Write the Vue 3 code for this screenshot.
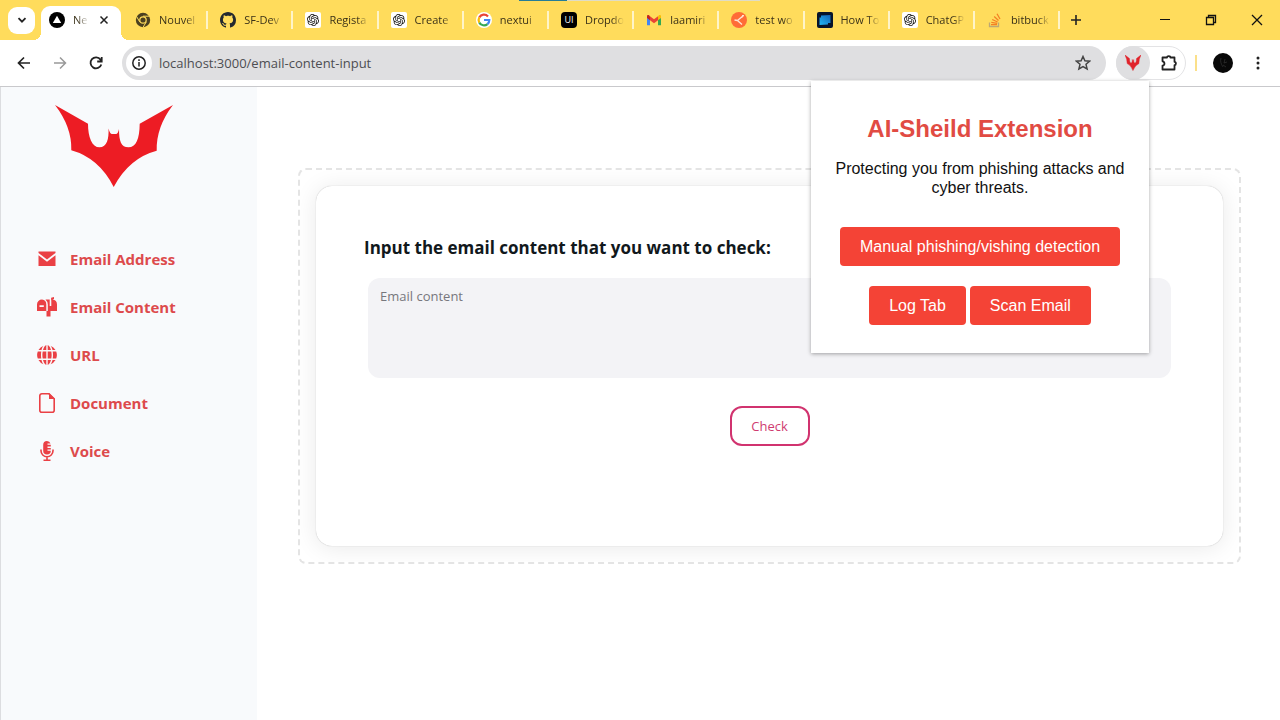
<template>
  <div class="browser">
    <header class="chrome">
      <div class="screen-edge"></div>
      <div class="tab-strip">
        <button class="tab-search" aria-label="Search tabs">
          <svg width="10" height="10" viewBox="0 0 10 10"><path d="M1.5 3.2 5 6.7l3.5-3.5" fill="none" stroke="#222" stroke-width="1.8" /></svg>
        </button>
        <div class="tab-active">
          <svg class="favicon" viewBox="0 0 16 16"><circle cx="8" cy="8" r="8" fill="#000" /><path d="M8 3.8 12.2 11H3.8z" fill="#fff" /></svg>
          <span class="tab-title">Ne</span>
          <button class="tab-close" aria-label="Close tab">
            <svg width="10" height="10" viewBox="0 0 10 10"><path d="m1.5 1.5 7 7m0-7-7 7" stroke="#222" stroke-width="1.5" /></svg>
          </button>
        </div>
        <nav class="tabs" aria-label="Open tabs">
          <a v-for="(tab, i) in tabs" :key="i" class="tab" href="#">
            <svg v-if="tab.icon === 'chrome'" class="favicon" viewBox="0 0 16 16">
              <circle cx="8" cy="8" r="7.2" fill="#4b4020" />
              <path d="M8 4.2h6.7M4.7 9.9 1.4 4.2M11.3 9.9 8 15.3" stroke="#ffdc5c" stroke-width="1" />
              <circle cx="8" cy="8" r="3.8" fill="#ffdc5c" />
              <circle cx="8" cy="8" r="2.6" fill="#4b4020" />
            </svg>
            <svg v-else-if="tab.icon === 'github'" class="favicon" viewBox="0 0 16 16">
              <path fill="#24292f" d="M8 0C3.58 0 0 3.58 0 8c0 3.54 2.29 6.53 5.47 7.59.4.07.55-.17.55-.38 0-.19-.01-.82-.01-1.49-2.01.37-2.53-.49-2.69-.94-.09-.23-.48-.94-.82-1.13-.28-.15-.68-.52-.01-.53.63-.01 1.08.58 1.23.82.72 1.21 1.87.87 2.33.66.07-.52.28-.87.51-1.07-1.78-.2-3.64-.89-3.64-3.95 0-.87.31-1.59.82-2.15-.08-.2-.36-1.02.08-2.12 0 0 .67-.21 2.2.82.64-.18 1.32-.27 2-.27s1.36.09 2 .27c1.53-1.04 2.2-.82 2.2-.82.44 1.1.16 1.92.08 2.12.51.56.82 1.27.82 2.15 0 3.07-1.87 3.75-3.65 3.95.29.25.54.73.54 1.48 0 1.07-.01 1.93-.01 2.2 0 .21.15.46.55.38A8.01 8.01 0 0 0 16 8c0-4.42-3.58-8-8-8" />
            </svg>
            <svg v-else-if="tab.icon === 'openai'" class="favicon" viewBox="-4 -4 32 32">
              <rect x="-4" y="-4" width="32" height="32" rx="4" fill="#fff" />
              <path fill="#111" d="M22.2819 9.8211a5.9847 5.9847 0 0 0-.5157-4.9108 6.0462 6.0462 0 0 0-6.5098-2.9A6.0651 6.0651 0 0 0 4.9807 4.1818a5.9847 5.9847 0 0 0-3.9977 2.9 6.0462 6.0462 0 0 0 .7427 7.0966 5.98 5.98 0 0 0 .511 4.9107 6.051 6.051 0 0 0 6.5146 2.9001A5.9847 5.9847 0 0 0 13.2599 24a6.0557 6.0557 0 0 0 5.7718-4.2058 5.9894 5.9894 0 0 0 3.9977-2.9001 6.0557 6.0557 0 0 0-.7475-7.0729zm-9.022 12.6081a4.4755 4.4755 0 0 1-2.8764-1.0408l.1419-.0804 4.7783-2.7582a.7948.7948 0 0 0 .3927-.6813v-6.7369l2.02 1.1686a.071.071 0 0 1 .038.052v5.5826a4.504 4.504 0 0 1-4.4945 4.4944zm-9.6607-4.1254a4.4708 4.4708 0 0 1-.5346-3.0137l.142.0852 4.783 2.7582a.7712.7712 0 0 0 .7806 0l5.8428-3.3685v2.3324a.0804.0804 0 0 1-.0332.0615L9.74 19.9502a4.4992 4.4992 0 0 1-6.1408-1.6464zM2.3408 7.8956a4.485 4.485 0 0 1 2.3655-1.9728V11.6a.7664.7664 0 0 0 .3879.6765l5.8144 3.3543-2.0201 1.1685a.0757.0757 0 0 1-.071 0l-4.8303-2.7865A4.504 4.504 0 0 1 2.3408 7.872zm16.5963 3.8558L13.1038 8.364 15.1192 7.2a.0757.0757 0 0 1 .071 0l4.8303 2.7913a4.4944 4.4944 0 0 1-.6765 8.1042v-5.6772a.79.79 0 0 0-.407-.667zm2.0107-3.0231l-.142-.0852-4.7735-2.7818a.7759.7759 0 0 0-.7854 0L9.409 9.2297V6.8974a.0662.0662 0 0 1 .0284-.0615l4.8303-2.7866a4.4992 4.4992 0 0 1 6.6802 4.66zM8.3065 12.863l-2.02-1.1638a.0804.0804 0 0 1-.038-.0567V6.0742a4.4992 4.4992 0 0 1 7.3757-3.4537l-.142.0805L8.704 5.459a.7948.7948 0 0 0-.3927.6813zm1.0976-2.3654l2.602-1.4998 2.6069 1.4998v2.9994l-2.5974 1.4997-2.6067-1.4997Z" />
            </svg>
            <svg v-else-if="tab.icon === 'google'" class="favicon" viewBox="0 0 16 16">
              <circle cx="8" cy="8" r="8" fill="#fff" />
              <g fill="none" stroke-width="2.2">
                <path d="M12 4.4A5.4 5.4 0 0 0 3.3 5.4" stroke="#ea4335" />
                <path d="M3.3 5.4a5.4 5.4 0 0 0 0 5.2" stroke="#fbbc05" />
                <path d="M3.3 10.6a5.4 5.4 0 0 0 8.2 1.5" stroke="#34a853" />
                <path d="M11.5 12.1A5.4 5.4 0 0 0 13.3 8H8" stroke="#4285f4" />
              </g>
            </svg>
            <span v-else-if="tab.icon === 'nextui'" class="favicon favicon-ui">UI</span>
            <svg v-else-if="tab.icon === 'gmail'" class="favicon" viewBox="0 0 16 16">
              <path d="M1 4v9.2h3V7z" fill="#4285f4" />
              <path d="M15 4v9.2h-3V7z" fill="#34a853" />
              <path d="m12 4.2 1-1c.9-.7 2 0 2 1V6l-3 2.3z" fill="#fbbc04" />
              <path d="M4 4.2 3 3.2c-1-.7-2 0-2 1V6l3 2.3z" fill="#c5221f" />
              <path d="m4 4.2 4 3.1 4-3.1v4.1l-4 3-4-3z" fill="#ea4335" />
            </svg>
            <svg v-else-if="tab.icon === 'postman'" class="favicon" viewBox="0 0 16 16">
              <circle cx="8" cy="8" r="8" fill="#ff6c37" />
              <path d="M12.500 3.500 6.500 8.500l4.500 4M6.500 8.500 3.500 8M10.500 5.500l2-2" fill="none" stroke="#ffe3d2" stroke-width="1.4" />
            </svg>
            <svg v-else-if="tab.icon === 'video'" class="favicon" viewBox="0 0 16 16">
              <defs>
                <linearGradient id="screen" x1="0" y1="1" x2="1" y2="0"><stop offset="0" stop-color="#22b8f5" /><stop offset="1" stop-color="#1464b8" /></linearGradient>
              </defs>
              <rect width="16" height="16" rx="2" fill="#07142b" />
              <path d="M4 3.500 13.500 3v8H11v1.500L2.500 13V5.500H4z" fill="url(#screen)" />
            </svg>
            <svg v-else class="favicon" viewBox="0 0 16 16">
              <path d="M2.5 10.500v4h9v-4" fill="none" stroke="#bda874" stroke-width="1.3" />
              <path d="M4 12.600h6M4.300 10.300l5.900 1M5.200 7.500l5.400 2.500M7.200 4.500l4.300 4M10 1.800l3 5.200" stroke="#f48024" stroke-width="1.3" />
            </svg>
            <span class="tab-title">{{ tab.title }}</span>
          </a>
        </nav>
        <button class="new-tab" aria-label="New tab">
          <svg width="12" height="12" viewBox="0 0 12 12"><path d="M6 1v10M1 6h10" stroke="#222" stroke-width="1.6" /></svg>
        </button>
        <div class="window-controls">
          <button aria-label="Minimize"><svg width="12" height="12" viewBox="0 0 12 12"><path d="M1 5.500h10" stroke="#111" /></svg></button>
          <button aria-label="Restore"><svg width="12" height="12" viewBox="0 0 12 12"><path d="M1.500 3.500h7v7h-7zM3.500 3.500v-2h7v7h-2" fill="none" stroke="#111" stroke-width="1.3" /></svg></button>
          <button aria-label="Close"><svg width="12" height="12" viewBox="0 0 12 12"><path d="m1 1 10 10M11 1 1 11" stroke="#111" stroke-width="1.3" /></svg></button>
        </div>
      </div>

      <div class="toolbar">
        <div class="nav-buttons">
          <button aria-label="Back"><svg width="14" height="14" viewBox="0 0 14 14"><path d="M13 7H2M7 1.500 1.500 7 7 12.500" fill="none" stroke="#222" stroke-width="1.7" /></svg></button>
          <button aria-label="Forward"><svg width="14" height="14" viewBox="0 0 14 14"><path d="M1 7h11M7 1.500 12.500 7 7 12.500" fill="none" stroke="#999" stroke-width="1.5" /></svg></button>
          <button aria-label="Reload"><svg width="14" height="14" viewBox="0 0 14 14"><path d="M12.300 8.500A5.500 5.500 0 1 1 11.500 3.600L12.500 5M12.700 1v4.500H8.200" fill="none" stroke="#222" stroke-width="1.8" /></svg></button>
        </div>
        <div class="address-bar">
          <button class="site-info" aria-label="Site information">
            <svg width="14" height="14" viewBox="0 0 14 14"><circle cx="7" cy="7" r="6.200" fill="none" stroke="#222" stroke-width="1.5" /><path d="M7 6v4.500M7 3.300V5" stroke="#222" stroke-width="1.5" /></svg>
          </button>
          <input v-model="url" class="url" type="text" aria-label="Address" />
          <button class="bookmark" aria-label="Bookmark this tab">
            <svg width="16" height="16" viewBox="0 0 16 16"><path d="m8 1.500 1.900 4.300 4.700.4-3.600 3.100 1.100 4.600L8 11.500l-4.100 2.400L5 9.300 1.400 6.200l4.700-.4z" fill="none" stroke="#444" stroke-width="1.5" /></svg>
          </button>
        </div>
        <div class="extensions">
          <button class="extension-active" aria-label="AI-Sheild">
            <svg width="16" height="16" viewBox="0 0 118 118"><path :d="batPath" transform="scale(1 1.4)" fill="#e0232b" stroke="#e0232b" stroke-width="3" /></svg>
          </button>
          <button class="extension-menu" aria-label="Extensions">
            <svg width="18" height="18" viewBox="0 0 18 18"><path d="M2.500 3.500H7a1.700 1.400 0 0 1 3.400 0h4.100v4.300a1.400 1.700 0 0 1 0 3.400v4.300h-12v-3.800c2.600-.4 2.600-4 0-4.400z" fill="none" stroke="#222" stroke-width="1.8" stroke-linejoin="round" /></svg>
          </button>
        </div>
        <span class="toolbar-divider"></span>
        <button class="profile" aria-label="Profile">
          <svg width="20" height="20" viewBox="0 0 20 20"><circle cx="10" cy="10" r="10" fill="#080808" /><path d="M8 5c-1 3 0 6 2 9M12 6l-1 4 3-1M10 12l3 2" fill="none" stroke="#3a3a3a" stroke-width=".6" /></svg>
        </button>
        <button class="more" aria-label="Menu">
          <svg width="4" height="16" viewBox="0 0 4 16"><g fill="#222"><circle cx="2" cy="3" r="1.5" /><circle cx="2" cy="8" r="1.5" /><circle cx="2" cy="13" r="1.5" /></g></svg>
        </button>
      </div>

      <section class="popup">
        <h1>AI-Sheild Extension</h1>
        <p>Protecting you from phishing attacks and cyber threats.</p>
        <div class="popup-actions">
          <button>Manual phishing/vishing detection</button>
          <button>Log Tab</button>
          <button>Scan Email</button>
        </div>
      </section>
    </header>

    <div class="page">
      <aside class="sidebar">
        <svg class="logo" viewBox="0 0 118 82" role="img" aria-label="AI-Sheild"><path :d="batPath" fill="#ed1c24" /></svg>
        <nav class="menu">
          <a v-for="item in menu" :key="item.label" class="menu-item" href="#">
            <svg class="menu-icon" viewBox="0 0 20 20">
              <path v-for="d in item.fills" :key="d" :d="d" fill="currentColor" fill-rule="evenodd" />
              <path v-if="item.stroke" :d="item.stroke" fill="none" stroke="currentColor" stroke-width="1.6" />
            </svg>
            <span>{{ item.label }}</span>
          </a>
        </nav>
      </aside>

      <main class="content">
        <div class="drop-frame">
          <form class="card" @submit.prevent>
            <label for="email-content">Input the email content that you want to check:</label>
            <textarea id="email-content" v-model="emailContent" placeholder="Email content"></textarea>
            <button class="check" type="submit">Check</button>
          </form>
        </div>
      </main>
    </div>
  </div>
</template>

<script setup>
import { ref } from 'vue';

const url = ref('localhost:3000/email-content-input');
const emailContent = ref('');

const batPath = 'M0 0 33 18.7C33 32 37 42.3 44.500 42.300S54 34 53.500 23.500Q55 29 57 29H61Q63 29 64 24C64 36 66 42.300 73.500 42.300S84.500 34 84.700 18.700L118 0Q101 22 101.700 45.700Q74 53 58.700 82Q44 53 16.300 45.300Q17 22 0 0z';

const tabs = [
  { title: 'Nouvel', icon: 'chrome' },
  { title: 'SF-Dev', icon: 'github' },
  { title: 'Regista', icon: 'openai' },
  { title: 'Create', icon: 'openai' },
  { title: 'nextui', icon: 'google' },
  { title: 'Dropdo', icon: 'nextui' },
  { title: 'laamiri', icon: 'gmail' },
  { title: 'test wo', icon: 'postman' },
  { title: 'How To', icon: 'video' },
  { title: 'ChatGP', icon: 'openai' },
  { title: 'bitbuck', icon: 'stack' }
];

const menu = [
  {
    label: 'Email Address',
    fills: ['M1.5 2.5h17v1.4L10 10.5 1.5 3.9z', 'M1.5 6.2 10 12.8l8.5-6.6V17h-17z']
  },
  {
    label: 'Email Content',
    fills: [
      'M5 2.5a5 5 0 0 0-5 5V14h9.300V7.500A5 5 0 0 0 5 2.500zM2.500 8.300h4.300v1.800H2.500z',
      'M8.500 2.500h4.200V9h1.600V3.300h-.2V.7L17 0v2l-1.500.5A5 5 0 0 1 20 7.500V14h-6.500v5.500h-4V14h1.300V7.500a7 7 0 0 0-2.300-5z'
    ]
  },
  {
    label: 'URL',
    fills: [
      'M9.300 0v5H6C6.700 2.500 7.800.6 9.300 0zM10.700 0v5H14c-.7-2.500-1.800-4.400-3.300-5zM6.500.7A10 10 0 0 0 1.500 5h3C4.900 3.200 5.600 1.700 6.500.7zM13.500.7a10 10 0 0 1 5 4.300h-3c-.4-1.800-1.100-3.300-2-4.300z',
      'M.8 6.400h3.500a22 22 0 0 0 0 7.200H.8a10 10 0 0 1 0-7.200zM5.700 6.400h3.600v7.200H5.700a20 20 0 0 1 0-7.200zM10.700 6.400h3.600a20 20 0 0 1 0 7.200h-3.600zM15.700 6.400h3.500a10 10 0 0 1 0 7.200h-3.500a22 22 0 0 0 0-7.200z',
      'M9.300 20v-5H6c.7 2.500 1.800 4.400 3.300 5zM10.700 20v-5H14c-.7 2.500-1.800 4.400-3.300 5zM6.500 19.300a10 10 0 0 1-5-4.300h3c.4 1.800 1.100 3.300 2 4.300zM13.500 19.300a10 10 0 0 0 5-4.300h-3c-.4 1.800-1.100 3.300-2 4.300z'
    ]
  },
  {
    label: 'Document',
    fills: ['M12 0v6h6z'],
    stroke: 'M12 .8H4.800a2 2 0 0 0-2 2v14.400a2 2 0 0 0 2 2h10.400a2 2 0 0 0 2-2V5.800z'
  },
  {
    label: 'Voice',
    fills: [
      'M10 0a3.800 3.800 0 0 0-3.800 3.800v6a3.800 3.800 0 0 0 7.600 0h-3.300V8.500h3.300V6.900h-3.300V5.600h3.300V3.800h-3.300V2.500h3A3.800 3.800 0 0 0 10 0z'
    ],
    stroke: 'M4 8.500v1.300a6 6 0 0 0 12 0V8.500M10 16v3M6.500 19.200h7'
  }
];
</script>

<style>
body {
  margin: 0;
}
</style>

<style scoped>
.browser {
  min-height: 100vh;
  display: flex;
  flex-direction: column;
  background-color: #fff;
  font-family: 'Open Sans', 'Noto Sans', sans-serif;
}

.browser button {
  padding: 0;
  border: none;
  background: none;
  font-family: inherit;
  display: flex;
  align-items: center;
  justify-content: center;
}

.chrome {
  position: relative;
}

.tab-strip {
  height: 40px;
  display: flex;
  align-items: center;
  padding-left: 8px;
  background-color: #ffdc5c;
}

/* sliver of the window behind the browser */
.screen-edge {
  position: absolute;
  top: 0;
  left: 519px;
  width: 241px;
  height: 1px;
  background: linear-gradient(90deg, #257d97 48px, #dfdcc6 48px);
}

.browser .tab-search {
  width: 27px;
  height: 27px;
  border-radius: 9px;
  background-color: #fff;
}

.tab-active {
  position: relative;
  box-sizing: border-box;
  width: 80px;
  height: 34px;
  margin: 6px 2px 0 6px;
  padding: 0 12px 6px 8px;
  display: flex;
  align-items: center;
  border-radius: 9px 9px 0 0;
  background-color: #fff;
}

.tab-active::before,
.tab-active::after {
  content: '';
  position: absolute;
  bottom: 0;
  width: 8px;
  height: 8px;
}

.tab-active::before {
  left: -8px;
  background: radial-gradient(circle at 0 0, transparent 8px, #fff 8px);
}

.tab-active::after {
  right: -8px;
  background: radial-gradient(circle at 100% 0, transparent 8px, #fff 8px);
}

.favicon {
  width: 16px;
  height: 16px;
  flex: none;
}

.favicon-ui {
  border-radius: 4px;
  background-color: #000;
  color: #fff;
  font-size: 9px;
  line-height: 16px;
  text-align: center;
}

.tab-title {
  flex: 1;
  min-width: 0;
  margin-left: 8px;
  white-space: nowrap;
  font-size: 11px;
  line-height: 18px;
  color: #3a3118;
  mask-image: linear-gradient(90deg, #000 calc(100% - 12px), transparent);
}

.tab-active .tab-title {
  margin-right: 10px;
}

.tabs {
  flex: 0 1 937px;
  min-width: 0;
  display: flex;
}

.tab {
  flex: 1;
  min-width: 0;
  box-sizing: border-box;
  height: 18px;
  padding: 0 8px 0 12px;
  display: flex;
  align-items: center;
  text-decoration: none;
  border-right: 2px solid #fff4c9;
}

.browser .new-tab {
  width: 32px;
  height: 28px;
}

.window-controls {
  margin-left: auto;
  display: flex;
}

.window-controls button {
  width: 46px;
  height: 40px;
}

.toolbar {
  height: 46px;
  box-sizing: content-box;
  padding-right: 12px;
  display: flex;
  align-items: center;
  border-bottom: 1px solid #c9c9cc;
  background-color: #fff;
}

.nav-buttons {
  display: flex;
  padding: 0 8px 0 6px;
}

.nav-buttons button {
  width: 36px;
  height: 34px;
}

.address-bar {
  flex: 1;
  height: 34px;
  box-sizing: border-box;
  padding: 0 15px 0 4px;
  display: flex;
  align-items: center;
  border-radius: 17px;
  background-color: #dfdfe1;
}

.browser .site-info {
  width: 26px;
  height: 26px;
  border-radius: 50%;
  background-color: #fff;
}

.url {
  flex: 1;
  min-width: 0;
  margin-left: 7px;
  padding: 0;
  border: none;
  outline: none;
  background: none;
  font-family: inherit;
  font-size: 13px;
  line-height: 20px;
  color: #4d4e52;
}

.extensions {
  margin-left: 10px;
  display: flex;
  height: 34px;
  box-sizing: border-box;
  border: 1px solid #e3e3e5;
  border-radius: 17px;
}

.browser .extension-active {
  width: 34px;
  height: 34px;
  margin: -1px;
  border-radius: 50%;
  background-color: #dfdfe1;
}

.browser .extension-menu {
  width: 36px;
  padding-left: 4px;
}

.toolbar-divider {
  width: 2px;
  height: 16px;
  margin: 0 16px 0 9px;
  background-color: #fbe08a;
}

.more {
  width: 20px;
  height: 34px;
  margin-left: 15px;
}

.popup {
  position: absolute;
  z-index: 2;
  top: 81px;
  right: 131px;
  width: 338px;
  box-sizing: border-box;
  padding: 32px 20px 18px;
  background-color: #fff;
  box-shadow: 0 1px 4px rgba(0, 0, 0, 0.35);
  font-family: 'Liberation Sans', Arial, sans-serif;
  text-align: center;
}

.popup h1 {
  margin: 0;
  font-size: 24px;
  line-height: 32px;
  font-weight: 700;
  color: #e14b43;
}

.popup p {
  margin: 14px 0 20px;
  font-size: 16px;
  line-height: 19px;
  color: #111;
}

.popup-actions {
  display: flex;
  flex-wrap: wrap;
  justify-content: center;
  column-gap: 4px;
}

.popup-actions button {
  height: 39px;
  margin: 10px 0;
  padding: 0 20px;
  border-radius: 4px;
  background-color: #f44336;
  color: #fff;
  font-size: 16px;
}

.page {
  flex: 1;
  display: flex;
  border-left: 1px solid #dcdde0;
}

.sidebar {
  width: 256px;
  flex: none;
  background-color: #f8fafc;
}

.logo {
  display: block;
  width: 118px;
  height: 82px;
  margin: 18px 0 0 54px;
}

.menu {
  margin-top: 60px;
  padding-left: 36px;
}

.menu-item {
  height: 24px;
  margin-bottom: 24px;
  display: flex;
  align-items: center;
  gap: 13px;
  text-decoration: none;
  color: #dd4a4c;
  font-size: 15px;
  line-height: 24px;
  font-weight: 700;
}

.menu-icon {
  width: 20px;
  height: 20px;
  color: #ea4045;
}

.content {
  flex: 1;
  min-width: 0;
  padding: 81px 39px 40px 41px;
}

.drop-frame {
  padding: 16px;
  overflow: hidden;
  border: 2px dashed #e4e4e4;
  border-radius: 8px;
}

.card {
  box-sizing: border-box;
  min-height: 360px;
  padding: 48px;
  display: flex;
  flex-direction: column;
  align-items: center;
  border-radius: 16px;
  background-color: #fff;
  box-shadow: 0 0 1px rgba(0, 0, 0, 0.3), 0 2px 24px rgba(0, 0, 0, 0.09);
}

.card label {
  align-self: stretch;
  font-size: 17px;
  line-height: 28px;
  font-weight: 700;
  color: #11181c;
}

.card textarea {
  align-self: stretch;
  box-sizing: border-box;
  height: 100px;
  margin: 16px 4px 28px;
  padding: 8px 12px;
  border: none;
  outline: none;
  resize: none;
  border-radius: 12px;
  background-color: #f3f3f6;
  font-family: inherit;
  font-size: 13px;
  line-height: 20px;
  color: #11181c;
}

.card textarea::placeholder {
  color: #77777d;
}

.card .check {
  width: 80px;
  height: 40px;
  border: 2px solid #d1336f;
  border-radius: 12px;
  font-size: 13px;
  color: #cf3c70;
}
</style>
